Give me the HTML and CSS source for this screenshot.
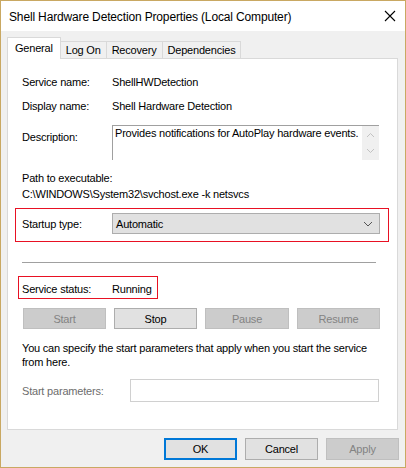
FILE: index.html
```html
<!DOCTYPE html>
<html lang="en">
<head>
    <meta charset="UTF-8">
    <title>Shell Hardware Detection Properties (Local Computer)</title>
    <link rel="stylesheet" href="styles.css">
</head>
<body>
    <div class="window">
        <div class="titlebar">
            <span class="title">Shell Hardware Detection Properties (Local Computer)</span>
            <svg class="close" width="12" height="12" viewBox="0 0 12 12">
                <path d="M1 1 L11 11 M11 1 L1 11" stroke="#000" stroke-width="1.1" fill="none"/>
            </svg>
        </div>

        <div class="client">
            <div class="tabs">
                <div class="tab active">General</div>
                <div class="tab">Log On</div>
                <div class="tab">Recovery</div>
                <div class="tab">Dependencies</div>
            </div>

            <div class="panel">
                <div class="row first">
                    <span class="label">Service name:</span>
                    <span>ShellHWDetection</span>
                </div>
                <div class="row">
                    <span class="label">Display name:</span>
                    <span>Shell Hardware Detection</span>
                </div>
                <div class="row desc-row">
                    <span class="label desc-label">Description:</span>
                    <div class="desc-box">
                        <div class="desc-text">Provides notifications for AutoPlay hardware events.</div>
                        <div class="scrollbar">
                            <svg width="9" height="6" viewBox="0 0 9 6"><path d="M1 5 L4.5 1.5 L8 5" stroke="#c2c2c2" fill="none"/></svg>
                            <svg width="9" height="6" viewBox="0 0 9 6"><path d="M1 1 L4.5 4.5 L8 1" stroke="#c2c2c2" fill="none"/></svg>
                        </div>
                    </div>
                </div>

                <div class="path-label">Path to executable:</div>
                <div class="path-value">C:\WINDOWS\System32\svchost.exe -k netsvcs</div>

                <div class="highlight startup">
                    <span class="label">Startup type:</span>
                    <div class="combo">
                        <span>Automatic</span>
                        <svg width="10" height="6" viewBox="0 0 10 6"><path d="M1 1 L5 5 L9 1" stroke="#555" fill="none"/></svg>
                    </div>
                </div>

                <div class="separator"></div>

                <div class="highlight status">
                    <span class="label">Service status:</span>
                    <span>Running</span>
                </div>

                <div class="service-buttons">
                    <button class="btn" disabled>Start</button>
                    <button class="btn">Stop</button>
                    <button class="btn" disabled>Pause</button>
                    <button class="btn" disabled>Resume</button>
                </div>

                <p class="hint">You can specify the start parameters that apply when you start the service from here.</p>

                <div class="params">
                    <span class="params-label">Start parameters:</span>
                    <div class="params-input"></div>
                </div>
            </div>

            <div class="footer">
                <button class="btn default">OK</button>
                <button class="btn">Cancel</button>
                <button class="btn" disabled>Apply</button>
            </div>
        </div>
    </div>
</body>
</html>
```

FILE: styles.css
```css
* {
    box-sizing: border-box;
}
body {
    margin: 0;
    font-family: "Liberation Sans", Arial, sans-serif;
    font-size: 11px;
    letter-spacing: -0.2px;
    color: #000;
    background: #f0f0f0;
}
.window {
    width: 406px;
    height: 468px;
    border: 1px solid #c9a862;
    background: #f0f0f0;
    display: flex;
    flex-direction: column;
}
.titlebar {
    height: 30px;
    background: #fff;
    display: flex;
    align-items: center;
    padding: 0 9px 0 8px;
    flex-shrink: 0;
}
.title {
    flex: 1;
    font-size: 12px;
    letter-spacing: -0.15px;
    padding-top: 1px;
}
.close {
    display: block;
}
.client {
    padding: 6px 7px 0 6px;
}

/* tabs */
.tabs {
    display: flex;
    align-items: flex-end;
    height: 21px;
}
.tab {
    height: 17px;
    line-height: 16px;
    padding: 0 5px;
    border: 1px solid #d9d9d9;
    border-bottom: none;
    border-left: none;
    background: #f0f0f0;
}
.tab.active {
    height: 22px;
    line-height: 20px;
    padding: 0 7px;
    background: #fff;
    border-left: 1px solid #d9d9d9;
    margin-bottom: -1px;
    position: relative;
    z-index: 1;
}
.panel {
    height: 372px;
    background: #fff;
    border: 1px solid #d9d9d9;
    padding: 15px 0 0 14px;
}

/* rows */
.row {
    display: flex;
    line-height: 16px;
    margin-bottom: 8px;
}
.label {
    width: 90px;
    flex-shrink: 0;
}
.desc-row {
    margin-top: 11px;
    margin-bottom: 10px;
}
.desc-label {
    padding-top: 4px;
}
.desc-box {
    width: 267px;
    height: 35px;
    display: flex;
    border-top: 1px solid #a0a0a0;
    border-left: 1px solid #a0a0a0;
}
.desc-text {
    flex: 1;
    padding: 0 0 0 2px;
    line-height: 14px;
}
.scrollbar {
    width: 17px;
    background: #f0f0f0;
    display: flex;
    flex-direction: column;
    align-items: center;
    justify-content: space-between;
    padding: 6px 0 6px;
}
.scrollbar svg {
    display: block;
}
.path-label,
.path-value {
    line-height: 16px;
}

/* red outlined areas */
.highlight {
    border: 1px solid #e81123;
    display: flex;
    align-items: center;
}
.startup {
    margin: 6px 0 0 -7px;
    width: 374px;
    padding: 4px 0 7px 6px;
}
.combo {
    width: 268px;
    height: 21px;
    background: #e1e1e1;
    border: 1px solid #adadad;
    display: flex;
    align-items: center;
    justify-content: space-between;
    padding: 0 6px 0 3px;
}
.separator {
    width: 354px;
    height: 1px;
    background: #a0a0a0;
    margin: 20px 0 13px;
}
.status {
    margin-left: -4px;
    width: 140px;
    height: 23px;
    padding: 2px 0 0 3px;
}

/* buttons */
.btn {
    font-family: inherit;
    font-size: 11px;
    letter-spacing: -0.2px;
    height: 21px;
    padding: 0;
    background: #e1e1e1;
    border: 1px solid #adadad;
    color: #000;
}
.btn:disabled {
    background: #cccccc;
    border-color: #bfbfbf;
    color: #838383;
}
.btn.default {
    border: 2px solid #0078d7;
}
.service-buttons {
    display: grid;
    grid-template-columns: 83px 83px 84px 83px;
    column-gap: 8px;
    margin: 9px 0 0 1px;
}
.hint {
    margin: 12px 0 0;
    line-height: 14px;
    width: 360px;
}
.params {
    display: flex;
    align-items: center;
    margin-top: 10px;
}
.params-label {
    width: 108px;
    color: #6d6d6d;
}
.params-input {
    width: 249px;
    height: 23px;
    border: 1px solid #d0d0d0;
    background: #fff;
}

/* dialog buttons */
.footer {
    display: flex;
    justify-content: flex-end;
    gap: 8px;
    margin: 8px -1px 0 0;
}
.footer .btn {
    width: 73px;
    height: 22px;
}
```
